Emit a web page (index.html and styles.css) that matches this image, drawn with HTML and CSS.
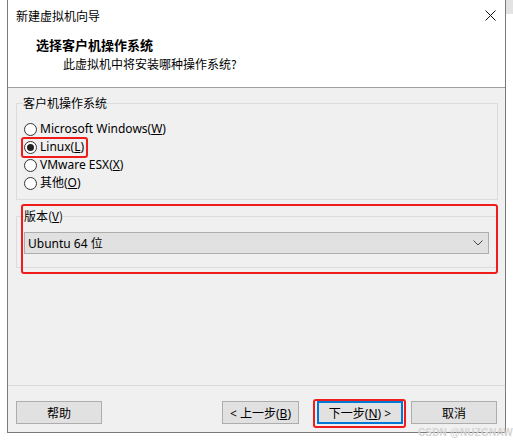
FILE: index.html
```html
<!DOCTYPE html>
<html lang="zh-CN">
<head>
<meta charset="utf-8">
<title>新建虚拟机向导</title>
<link rel="stylesheet" href="styles.css">
</head>
<body>
<div class="behind"></div>
<div class="window">
  <div class="titlebar">
    <span class="title">新建虚拟机向导</span>
    <svg class="close" width="11" height="11" viewBox="0 0 11 11"><path d="M0.5 0.5 L10.5 10.5 M10.5 0.5 L0.5 10.5" stroke="#111" stroke-width="1" fill="none"/></svg>
  </div>
  <div class="header">
    <div class="h-title">选择客户机操作系统</div>
    <div class="h-sub">此虚拟机中将安装哪种操作系统?</div>
  </div>
  <div class="content">
    <fieldset class="group group-os">
      <legend>客户机操作系统</legend>
      <div class="radio-row"><span class="radio"></span><span>Microsoft Windows(<u>W</u>)</span></div>
      <div class="radio-row"><span class="radio checked"></span><span>Linux(<u>L</u>)</span></div>
      <div class="radio-row"><span class="radio"></span><span>VMware ESX(<u>X</u>)</span></div>
      <div class="radio-row"><span class="radio"></span><span>其他(<u>O</u>)</span></div>
    </fieldset>
    <fieldset class="group group-ver">
      <legend>版本(<u>V</u>)</legend>
      <div class="combo">
        <span>Ubuntu 64 位</span>
        <svg width="10" height="6" viewBox="0 0 10 6"><polyline points="0.5,0.5 5,5 9.5,0.5" stroke="#444" stroke-width="1" fill="none"/></svg>
      </div>
    </fieldset>
    <div class="footer">
      <button class="btn btn-help">帮助</button>
      <div class="nav">
        <button class="btn btn-back">&lt; 上一步(<u>B</u>)</button>
        <button class="btn btn-next">下一步(<u>N</u>) &gt;</button>
        <button class="btn btn-cancel">取消</button>
      </div>
    </div>
  </div>
</div>
<div class="mark mark-linux"></div>
<div class="mark mark-version"></div>
<div class="mark mark-next"></div>
<div class="watermark">CSDN @NUZGNAW</div>
</body>
</html>
```
FILE: styles.css
```css
* { box-sizing: border-box; }
html, body {
  margin: 0;
  padding: 0;
  width: 513px;
  height: 440px;
  overflow: hidden;
  background: #ffffff;
}
body {
  position: relative;
  font-family: "Noto Sans", "Noto Sans CJK SC", sans-serif;
  font-size: 12px;
  color: #000;
}
.behind {
  position: absolute;
  left: 506px;
  top: 0;
  width: 7px;
  height: 14px;
  background: #e3e3e3;
}
.window {
  margin-left: 7px;
  width: 499px;
  height: 433px;
  border: 1px solid #7a7a7a;
  border-top: none;
  display: flex;
  flex-direction: column;
  background: #fff;
}
.titlebar {
  height: 30px;
  display: flex;
  align-items: center;
  justify-content: space-between;
  padding: 0 9px 0 8px;
}
.title {
  font-family: "Noto Sans CJK SC", sans-serif;
  font-size: 12px;
}
.header {
  height: 58px;
  border-bottom: 1px solid #a0a0a0;
  padding: 6px 0 0 28px;
  font-family: "Noto Sans CJK SC", sans-serif;
}
.h-title {
  font-weight: bold;
  font-size: 13px;
  line-height: 18px;
}
.h-sub {
  font-size: 12px;
  line-height: 16px;
  padding-left: 27px;
  margin-top: 2px;
}
.content {
  flex: 1;
  background: #f0f0f0;
  display: flex;
  flex-direction: column;
}
.group {
  margin: 0 7px 0 8px;
  border: 1px solid #dcdcdc;
  min-width: 0;
}
.group legend {
  padding: 0;
  margin-left: -1px;
  line-height: 16px;
  font-family: "Noto Sans CJK SC", sans-serif;
}
.group-os {
  margin-top: 7px;
  padding: 9px 7px 7px 7px;
}
.radio-row {
  display: flex;
  align-items: center;
  gap: 3px;
  height: 18px;
  line-height: 18px;
}
.radio {
  width: 13px;
  height: 13px;
  border-radius: 50%;
  border: 1px solid #333;
  background: #fff;
  display: flex;
  align-items: center;
  justify-content: center;
  flex: none;
}
.radio.checked::after {
  content: "";
  width: 7px;
  height: 7px;
  border-radius: 50%;
  background: #222;
}
.group-ver {
  margin-top: 8px;
  padding: 8px 8px 13px 7px;
}
.group-ver legend { margin-left: 0; }
.combo {
  height: 22px;
  border: 1px solid #adadad;
  background: #e1e1e1;
  display: flex;
  align-items: center;
  justify-content: space-between;
  padding: 0 5px 0 3px;
}
.footer {
  margin-top: auto;
  border-top: 1px solid #dadada;
  padding: 15px 8px 8px 8px;
  display: flex;
  justify-content: space-between;
}
.nav {
  display: flex;
}
.btn {
  height: 23px;
  border: 1px solid #adadad;
  background: #e1e1e1;
  font-family: "Noto Sans", "Noto Sans CJK SC", sans-serif;
  font-size: 12px;
  color: #000;
  padding: 0;
  margin: 0;
}
.btn-help { width: 86px; }
.btn-back { width: 77px; }
.btn-next {
  width: 86px;
  margin-left: 18px;
  border: 2px solid #0078d7;
}
.btn-cancel { width: 86px; margin-left: 8px; }
.mark {
  position: absolute;
  border: 2px solid #f01c1c;
  border-radius: 3px;
}
.mark-linux { left: 21px; top: 137px; width: 67px; height: 21px; }
.mark-version { left: 21px; top: 204px; width: 477px; height: 70px; }
.mark-next { left: 313px; top: 399px; width: 93px; height: 29px; }
.watermark {
  position: absolute;
  right: 0;
  top: 427px;
  font-family: "Liberation Sans", sans-serif;
  font-size: 10px;
  font-weight: bold;
  color: #d4d4d4;
  letter-spacing: 0.2px;
}
```
